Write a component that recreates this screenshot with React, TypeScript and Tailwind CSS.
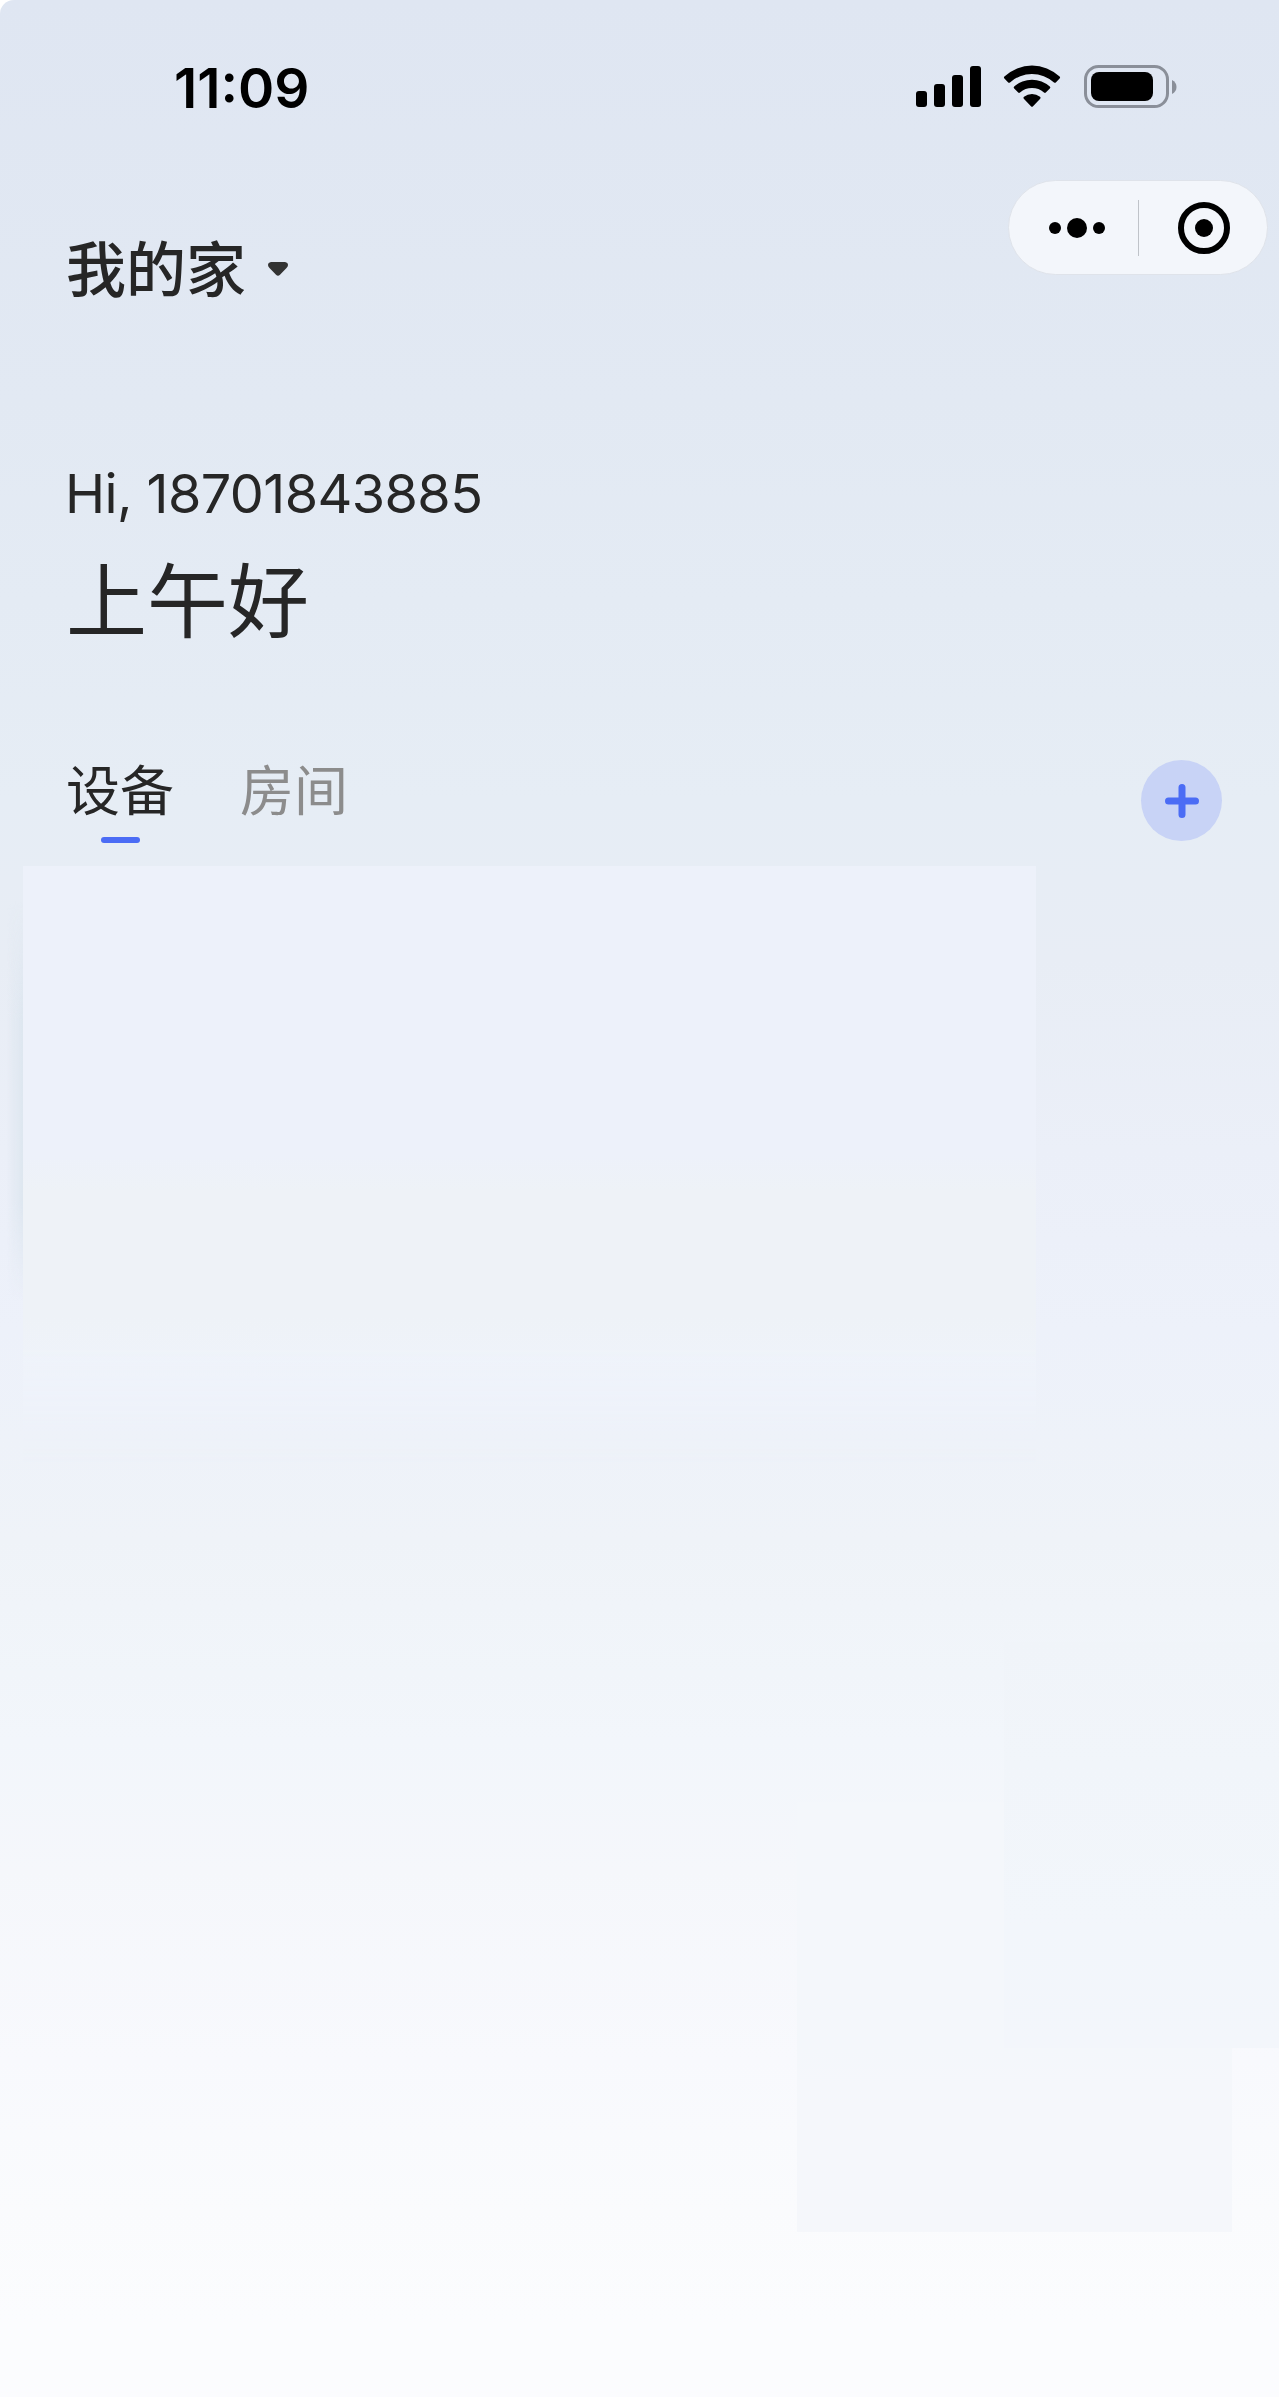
import type { ReactNode } from "react";

function SignalIcon() {
  return (
    <svg width="65" height="41" viewBox="0 0 65 41" fill="#000">
      <rect x="0" y="25" width="11" height="16" rx="3" />
      <rect x="18" y="18" width="11" height="23" rx="3" />
      <rect x="36" y="9" width="11" height="32" rx="3" />
      <rect x="54" y="0" width="11" height="41" rx="3" />
    </svg>
  );
}

function WifiIcon() {
  return (
    <svg width="58" height="42" viewBox="0 0 58 42" fill="#000">
      <path d="M1.4 11.6A40 40 0 0 1 56.6 11.6Q57.6 12.5 56.6 13.6L52.8 17.4Q52 18.2 51 17.4A33 33 0 0 0 7 17.4Q6 18.2 5.2 17.4L1.4 13.6Q.4 12.5 1.4 11.6Z" />
      <path d="M11.2 21.6A26.5 26.5 0 0 1 46.8 21.6Q47.8 22.5 46.8 23.5L42.8 27.5Q42 28.3 41 27.5A18.5 18.5 0 0 0 17 27.5Q16 28.3 15.2 27.5L11.2 23.5Q10.2 22.5 11.2 21.6Z" />
      <path d="M21 31.7A13 13 0 0 1 37 31.7Q38.2 32.7 37.2 33.7L29.8 41.4Q29 42 28.2 41.4L20.8 33.7Q19.8 32.7 21 31.7Z" />
    </svg>
  );
}

function BatteryIcon() {
  return (
    <svg width="93" height="43" viewBox="0 0 93 43">
      <rect x="1.5" y="1.5" width="82" height="40" rx="13" fill="none" stroke="#8a8f99" strokeWidth="3" />
      <rect x="7" y="7" width="62" height="29" rx="8" fill="#000" />
      <path d="M88 15C94 17.5 94 26.5 88 29Z" fill="#8a8f99" />
    </svg>
  );
}

function Capsule() {
  return (
    <div className="flex h-[95px] w-[260px] items-center rounded-full border border-[#dfe3ea] bg-[#f3f6fb]">
      <div className="flex w-[129px] items-center justify-center gap-[6px] pl-[7px]">
        <span className="size-3 rounded-full bg-black" />
        <span className="size-[20px] rounded-full bg-black" />
        <span className="size-3 rounded-full bg-black" />
      </div>
      <span className="h-14 w-px bg-[#bfc3c9]" />
      <div className="flex flex-1 items-center justify-center pl-[2px]">
        <span className="flex size-[52px] items-center justify-center rounded-full border-[6px] border-black">
          <span className="size-[18px] rounded-full bg-black" />
        </span>
      </div>
    </div>
  );
}

type TabProps = {
  active?: boolean;
  children: ReactNode;
};

function Tab({ active, children }: TabProps) {
  return (
    <button className="flex flex-col items-center">
      <span
        className={
          active
            ? "text-[54px] leading-[72px] text-[#262626]"
            : "text-[54px] leading-[72px] text-[#8c8c8c]"
        }
      >
        {children}
      </span>
      {active && <span className="mt-[9px] h-[6px] w-[39px] rounded-full bg-[#4b6cf5]" />}
    </button>
  );
}

export default function App() {
  return (
    <div className="bg-white">
      <main className="flex h-[2397px] w-[1279px] flex-col overflow-hidden rounded-tl-[14px] bg-[linear-gradient(180deg,#dfe6f2_0px,#e2e9f3_400px,#e6edf5_800px,#e8edf5_960px,#ebeff8_1150px,#edf1fa_1330px,#eef2f9_1440px,#eff3f8_1540px,#f2f6fb_1740px,#f5f7fb_1870px,#f8f9fd_2060px,#fafbfd_2210px,#fbfcfe_2320px,#fbfcfe_2397px)] font-['Inter','Noto_Sans_CJK_SC',sans-serif]">
        <div className="flex h-[180px] items-start justify-between pl-[174px] pr-[102px] pt-[65px]">
          <time className="-mt-[9px] text-[55px] font-semibold leading-[64px] text-black">11:09</time>
          <div className="flex items-start">
            <div className="pt-px">
              <SignalIcon />
            </div>
            <div className="ml-[22px]">
              <WifiIcon />
            </div>
            <div className="ml-[23px]">
              <BatteryIcon />
            </div>
          </div>
        </div>

        <header className="flex h-[270px] items-start justify-between pl-[66px] pr-[11px]">
          <button className="mt-[50px] flex items-center text-[60px] font-medium leading-[80px] text-[#262626]">
            我的家
            <svg width="20" height="14" viewBox="0 0 20 14" className="-mt-[3px] ml-[22px]" fill="#333">
              <path d="M3 0H17Q20 .5 20 3Q20 4.5 18.5 6L12 12.8Q10 14.6 8 12.8L1.5 6Q0 4.5 0 3Q0 .5 3 0Z" />
            </svg>
          </button>
          <Capsule />
        </header>

        <section className="h-[302px] pl-[66px] text-[#262626]">
          <p className="-ml-px pt-[11px] text-[54px] leading-[66px] tracking-[-0.6px]">Hi, 18701843885</p>
          <h1 className="mt-[20px] text-[81px] leading-[110px]">上午好</h1>
        </section>

        <nav className="flex h-[114px] items-start justify-between pl-[66px] pr-[57px]">
          <div className="flex items-start gap-[66px] pt-[4px]">
            <Tab active>设备</Tab>
            <Tab>房间</Tab>
          </div>
          <button aria-label="添加" className="mt-[8px] flex size-[81px] items-center justify-center rounded-full bg-[#c8d3f6]">
            <svg width="34" height="34" viewBox="0 0 34 34" stroke="#4b6cf5" strokeWidth="7" strokeLinecap="round">
              <path d="M17 3.5V30.5M3.5 17H30.5" />
            </svg>
          </button>
        </nav>

        <section className="flex h-[600px] items-start">
          <div className="mt-[35px] flex h-[400px] w-[23px] justify-end">
            <div className="h-full w-[16px] bg-linear-to-r from-transparent to-[#dde6ef] mask-[linear-gradient(180deg,transparent,#000_30%,#000_75%,transparent)]" />
          </div>
          <div className="h-[600px] w-[1013px] bg-[linear-gradient(180deg,#edf1fa_0px,#edf1fa_290px,#eef2f7_325px,#eef2f7_450px,#eff3fb_520px,#eff3fa_600px)] mask-[linear-gradient(180deg,#000_80%,transparent)]" />
        </section>

        {/* faint panels near the bottom right corner, overlapping in the middle column */}
        <section className="grid grow grid-cols-[797px_207px_228px_47px] grid-rows-[176px_160px_246px_184px_1fr]">
          <div className="col-span-2 col-start-3 row-span-2 row-start-2 bg-[linear-gradient(180deg,#f0f4f9,#f1f5fa_30%,#f2f6fb_70%,#f3f6fb)]" />
          <div className="col-start-2 row-start-3 bg-[#f4f7fb]" />
          <div className="col-span-2 col-start-2 row-start-4 bg-[linear-gradient(180deg,#f4f7fb,#f5f7fb_20%,#f5f7fb)]" />
        </section>
      </main>
    </div>
  );
}
